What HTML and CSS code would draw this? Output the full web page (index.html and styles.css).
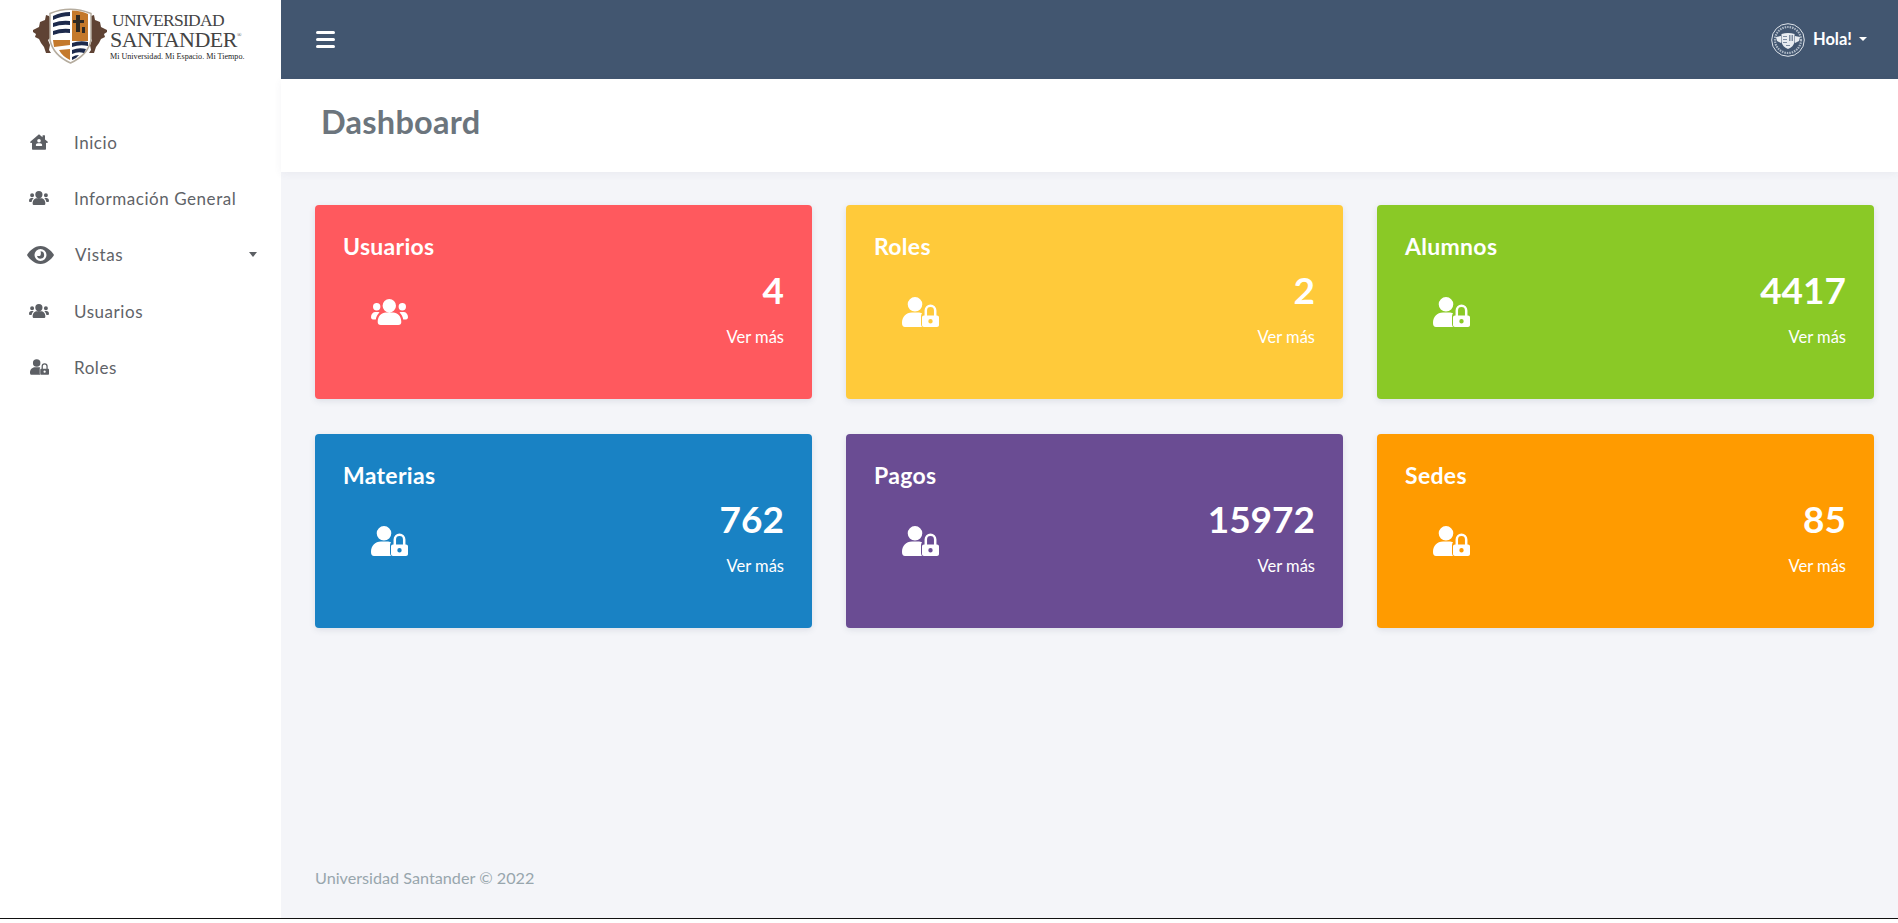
FILE: index.html
```html
<!DOCTYPE html>
<html lang="es">
<head>
<meta charset="utf-8">
<title>Dashboard</title>
<link rel="stylesheet" href="styles.css">
</head>
<body>
<svg class="defs" width="0" height="0" aria-hidden="true">
  <symbol id="i-users" viewBox="0 0 37 26"><path fill="currentColor" d="M18.300 0a6.700 6.700 0 1 1 0 13.400 6.700 6.700 0 0 1 0-13.400zM5.700 4a3.700 3.700 0 1 1 0 7.400 3.700 3.700 0 0 1 0-7.400zm25.600 0a3.700 3.700 0 1 1 0 7.400 3.700 3.700 0 0 1 0-7.400zM6.700 23c0-6 4-9.500 8-9.500h7.600c4 0 8 3.500 8 9.500 0 2-1 3-3 3H9.700c-2 0-3-1-3-3zM0 18c0-3 2-5 4.500-5h2c.8 0 1.500.2 2 .4-2 1.800-3.500 4.500-3.700 7.100H2c-1.200 0-2-1-2-2.500zM37 18c0-3-2-5-4.500-5h-2c-.8 0-1.500.2-2 .4 2 1.800 3.500 4.500 3.700 7.100H35c1.200 0 2-1 2-2.500z"/></symbol>
  <symbol id="i-lock" viewBox="0 0 37 30">
    <path fill="currentColor" d="M13 0a7.300 7.300 0 1 1 0 14.600A7.300 7.300 0 0 1 13 0zM0 26c0-6 4-10.500 10-10.500h6c1.500 0 3 .3 4 .7-.7 1-1 2-1 3V27c0 1 .3 2 1 3H3c-2 0-3-1.500-3-4z"/>
    <path fill="currentColor" fill-rule="evenodd" d="M22 18.500h13c1.200 0 2 .8 2 2V28c0 1.200-.8 2-2 2H22c-1.200 0-2-.8-2-2v-7.500c0-1.200.8-2 2-2zm6.500 3.500a2.200 2.200 0 1 0 0 4.400 2.200 2.200 0 0 0 0-4.400z"/>
    <path fill="none" stroke="currentColor" stroke-width="2.500" d="M23.800 19v-5.500a4.700 4.700 0 0 1 9.400 0V19"/>
  </symbol>
  <symbol id="i-home" viewBox="0 16 576 496"><path fill="currentColor" fill-rule="evenodd" d="M288 16l112 92V64c0-9 7-16 16-16h48c9 0 16 7 16 16v118l80 66c12 10 14 28 4 40-10 12-28 14-40 4l-12-10v198c0 18-14 32-32 32H96c-18 0-32-14-32-32V282l-12 10c-12 10-30 8-40-4-10-12-8-30 4-40zm0 150a58 58 0 1 0 0 116 58 58 0 0 0 0-116zm-38 140c-36 0-64 28-64 64 0 10 8 18 18 18h168c10 0 18-8 18-18 0-36-28-64-64-64z"/></symbol>
  <symbol id="i-eye" viewBox="0 64 576 384"><path fill="currentColor" fill-rule="evenodd" d="M288 64c128 0 232 106 280 176 8 12 8 20 0 32-48 70-152 176-280 176S56 342 8 272c-8-12-8-20 0-32C56 170 160 64 288 64zm0 64a128 128 0 1 0 0 256 128 128 0 0 0 0-256zm0 50a78 78 0 1 1-76 96c16 10 62 8 74-10s14-60 2-86z"/></symbol>
</svg>
<div class="app">
  <aside class="sidebar">
    <div class="brand">
      <svg class="crest" viewBox="0 0 74 57" aria-hidden="true">
        <path fill="#5f4334" d="M0 23l6-3 1-5 5-2 1-5 3 1 2 3v4l-1 5 1 9-3 3 2 5-1 5 2 3-5 0-2-6-3-4-2-4-4-2 1-3-3-2zM74 23l-6-3-1-5-5-2-1-5-3 1-2 3v4l1 5-1 9 3 3-2 5 1 5-2 3 5 0 2-6 3-4 2-4 4-2-1-3 3-2z"/>
        <path fill="#fff" stroke="#b5ac9e" stroke-width="1.500" d="M17 6.500Q37-2 58 6.500V33q-3 15-20.500 23Q20 48 17 33z"/>
        <path fill="#c4792b" d="M39 3.500q9 0 16 3.500v27H39zM20 33h17v5l-16 2zM37 42v11q-8-4-11-10z"/>
        <path fill="#1d2a4c" d="M20 9q8-4 17-4v4q-9 0-17 4zM20 16q8-3 17-2v4q-9-1-17 2zM20 24q8-3 17-2v4q-9-1-17 2zM39 36q8-3 16-1v4q-8-2-16 1zM39 43q7-3 14-1l-2 4q-6-2-12 1zM39 50q3-2 7-2l-3 3-4 2z"/>
        <path fill="#2f2a24" d="M43 8h4v5h4v3h-4v9h-4v-9h-3v-3h3zM49 20h3v6h-3z"/>
      </svg>
      <div class="wordmark">
        <span class="wm-top">UNIVERSIDAD</span>
        <span class="wm-main">SANTANDER<sup class="wm-reg">®</sup></span>
        <span class="wm-tag">Mi Universidad. Mi Espacio. Mi Tiempo.</span>
      </div>
    </div>
    <nav class="nav">
      <a class="nav-item"><span class="nav-icon"><svg class="ic-home"><use href="#i-home"/></svg></span><span>Inicio</span></a>
      <a class="nav-item"><span class="nav-icon"><svg class="ic-users"><use href="#i-users"/></svg></span><span>Información General</span></a>
      <a class="nav-item nav-vistas"><span class="nav-icon"><svg class="ic-eye"><use href="#i-eye"/></svg></span><span>Vistas</span><i class="caret caret-nav"></i></a>
      <a class="nav-item"><span class="nav-icon"><svg class="ic-users"><use href="#i-users"/></svg></span><span>Usuarios</span></a>
      <a class="nav-item"><span class="nav-icon"><svg class="ic-lock"><use href="#i-lock"/></svg></span><span>Roles</span></a>
    </nav>
  </aside>
  <div class="content">
    <header class="topbar">
      <div class="burger"><span></span><span></span><span></span></div>
      <div class="user">
        <svg class="avatar" viewBox="0 0 34 34" aria-hidden="true">
          <circle cx="17" cy="17" r="16.300" fill="none" stroke="#dfe4ea" stroke-width="1"/>
          <circle cx="17" cy="17" r="13" fill="none" stroke="#aeb9c6" stroke-width="2.200" stroke-dasharray="1.500 1"/>
          <path fill="#e8ecf0" d="M10.500 11q6.500-2 13 0v8q-1 5-6.500 7-5.500-2-6.500-7z"/>
          <path fill="#e8ecf0" d="M5 14l5-1v7l-4-2zM29 14l-5-1v7l4-2z"/>
          <path fill="#7d8ca0" d="M12 13h4v1h-4zM12 16h4v1h-4zM12 19h4v1h-4zM18 12h1.500v6H18zM20.500 12H22v6h-1.500zM15 22h4v1h-4z"/>
        </svg>
        <span class="user-name">Hola!</span>
        <i class="caret caret-user"></i>
      </div>
    </header>
    <div class="page-title"><h1>Dashboard</h1></div>
    <main class="grid">
      <section class="card red"><h2>Usuarios</h2><div class="card-row"><svg class="card-icon icon-users"><use href="#i-users"/></svg><div class="card-stat"><strong>4</strong><span>Ver más</span></div></div></section>
      <section class="card yellow"><h2>Roles</h2><div class="card-row"><svg class="card-icon"><use href="#i-lock"/></svg><div class="card-stat"><strong>2</strong><span>Ver más</span></div></div></section>
      <section class="card green"><h2>Alumnos</h2><div class="card-row"><svg class="card-icon"><use href="#i-lock"/></svg><div class="card-stat"><strong>4417</strong><span>Ver más</span></div></div></section>
      <section class="card blue"><h2>Materias</h2><div class="card-row"><svg class="card-icon"><use href="#i-lock"/></svg><div class="card-stat"><strong>762</strong><span>Ver más</span></div></div></section>
      <section class="card purple"><h2>Pagos</h2><div class="card-row"><svg class="card-icon"><use href="#i-lock"/></svg><div class="card-stat"><strong>15972</strong><span>Ver más</span></div></div></section>
      <section class="card orange"><h2>Sedes</h2><div class="card-row"><svg class="card-icon"><use href="#i-lock"/></svg><div class="card-stat"><strong>85</strong><span>Ver más</span></div></div></section>
    </main>
    <footer class="footer">Universidad Santander © 2022</footer>
  </div>
</div>
</body>
</html>
```
FILE: styles.css
```css
* { box-sizing: border-box; }
html, body { margin: 0; height: 100%; }
body {
  font-family: "Lato", "Open Sans", sans-serif;
  background: #fff;
  overflow: hidden;
}
.defs { display: block; height: 0; }
.app {
  display: flex;
  height: 919px;
  border-bottom: 1px solid #111;
}

/* Sidebar */
.sidebar {
  width: 281px;
  flex: none;
  background: #fff;
}
.brand {
  display: flex;
  align-items: flex-start;
  height: 114px;
  padding: 7px 0 0 33px;
}
.crest { width: 74px; height: 57px; flex: none; }
.wordmark {
  display: flex;
  flex-direction: column;
  font-family: "Liberation Serif", serif;
  color: #444;
  margin-left: 3px;
  padding-top: 4px;
}
.wm-top { font-size: 17.500px; line-height: 18px; margin-left: 2px; letter-spacing: -0.700px; }
.wm-main { font-size: 22px; line-height: 21px; letter-spacing: -0.500px; white-space: nowrap; }
.wm-reg { font-size: 6px; vertical-align: top; line-height: 12px; }
.wm-tag { font-size: 8.100px; line-height: 10px; margin-top: 2px; white-space: nowrap; color: #222; }
.nav { display: flex; flex-direction: column; }
.nav-item {
  display: flex;
  align-items: center;
  height: 56.300px;
  font-size: 17px;
  color: #5f6368;
  letter-spacing: 0.550px;
}
.nav-icon {
  width: 74px;
  flex: none;
  display: flex;
  justify-content: center;
  padding-left: 4px;
  color: #5c5f64;
}
.nav-vistas .nav-icon { width: 75px; padding-left: 5px; }
.ic-home { width: 18px; height: 16px; }
.ic-users { width: 20px; height: 14px; }
.ic-lock { width: 19px; height: 16px; }
.ic-eye { width: 27px; height: 18px; }
.caret {
  display: block;
  width: 0;
  height: 0;
  border-left: 4.500px solid transparent;
  border-right: 4.500px solid transparent;
  border-top: 5px solid currentColor;
}
.caret-nav { margin-left: auto; margin-right: 24px; color: #5c5f64; }

/* Main column */
.content {
  flex: 1;
  min-width: 0;
  display: flex;
  flex-direction: column;
  background: #f4f5f9;
}
.topbar {
  height: 79px;
  flex: none;
  background: #425670;
  color: #fff;
  display: flex;
  align-items: center;
  justify-content: space-between;
  padding: 0 31px 0 35px;
}
.burger { display: flex; flex-direction: column; gap: 4px; width: 19px; }
.burger span { display: block; height: 3px; background: #fff; border-radius: 2px; }
.user { display: flex; align-items: center; }
.avatar { width: 34px; height: 34px; margin-right: 8px; }
.user-name { font-size: 16.500px; font-weight: 700; margin-bottom: 2px; }
.caret-user { margin: 0 0 2px 7px; color: #fff; border-left-width: 4px; border-right-width: 4px; border-top-width: 4px; }
.page-title {
  height: 93px;
  flex: none;
  background: #fff;
  display: flex;
  align-items: center;
  padding: 0 0 9px 40px;
  box-shadow: 0 2px 8px rgba(60, 70, 100, 0.06);
}
.page-title h1 {
  margin: 0;
  font-size: 32.500px;
  font-weight: 700;
  color: #6c757d;
  letter-spacing: 0.250px;
}
.grid {
  display: grid;
  grid-template-columns: repeat(3, 497px);
  grid-auto-rows: 194px;
  column-gap: 34px;
  row-gap: 35px;
  padding: 33px 0 0 34px;
  flex: 1;
}
.card {
  border-radius: 4px;
  color: #fff;
  padding: 28px 28px 0;
  box-shadow: 0 2px 6px rgba(60, 70, 100, 0.12);
}
.card h2 {
  margin: 0;
  font-size: 23px;
  font-weight: 700;
  line-height: 26px;
  letter-spacing: 0.300px;
}
.card-row {
  display: flex;
  justify-content: space-between;
  align-items: flex-start;
  margin-top: 8px;
}
.card-icon {
  width: 37px;
  height: 30px;
  margin: 30px 0 0 28px;
}
.icon-users { height: 26px; margin-top: 32px; }
.card-stat {
  display: flex;
  flex-direction: column;
  align-items: flex-end;
}
.card-stat strong {
  font-size: 37px;
  line-height: 46px;
  font-weight: 700;
}
.card-stat span {
  font-size: 16.500px;
  line-height: 20px;
  margin-top: 14px;
}
.red { background: #ff595e; }
.yellow { background: #ffca3a; }
.green { background: #8ac926; }
.blue { background: #1982c4; }
.purple { background: #6a4c93; }
.orange { background: #ff9b00; }
.footer {
  height: 52px;
  flex: none;
  padding-left: 34px;
  font-size: 16.200px;
  color: #98a6ad;
  line-height: 24px;
}
```
